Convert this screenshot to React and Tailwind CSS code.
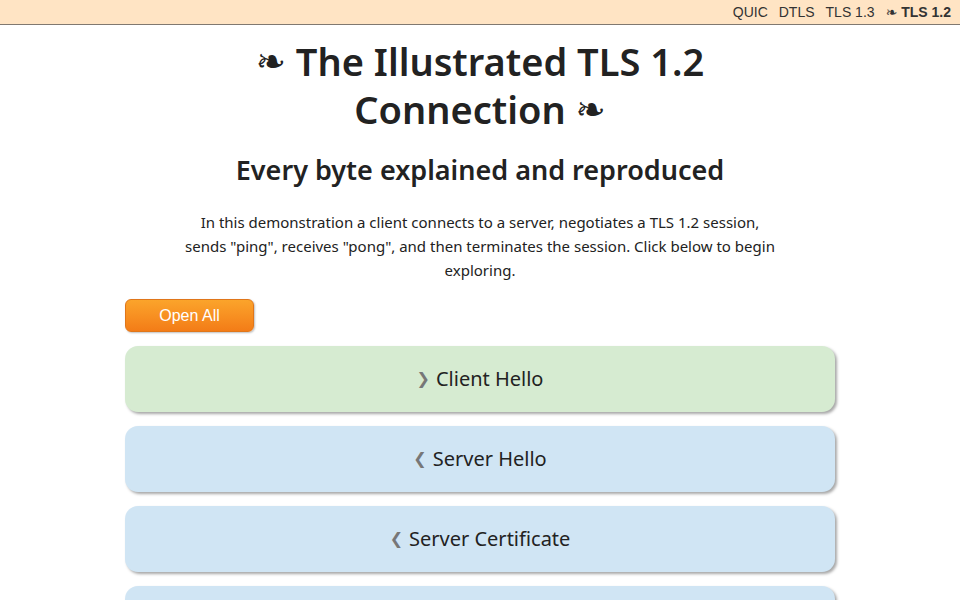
export default function App() {
  const cards = [
    { dir: "c", label: "Client Hello" },
    { dir: "s", label: "Server Hello" },
    { dir: "s", label: "Server Certificate" },
    { dir: "s", label: "Server Key Exchange Generation" },
  ];
  const sym = { fontFamily: '"DejaVu Sans", sans-serif' };
  return (
    <div className="h-[600px] overflow-hidden bg-white text-[#222]" style={{ fontFamily: '"Noto Sans", "Open Sans", sans-serif' }}>
      <div className="h-[25px] bg-[#ffe4c4] border-b border-[#807870] flex items-center justify-end pr-[9px] gap-[11px] text-[14px] text-[#333]" style={{ fontFamily: '"Liberation Sans", Arial, sans-serif' }}>
        <span>QUIC</span>
        <span>DTLS</span>
        <span>TLS 1.3</span>
        <span className="font-bold"><span style={sym} className="text-[14px] leading-none">❧</span> TLS 1.2</span>
      </div>
      <div className="w-[710px] mx-auto flex flex-col">
        <h1 className="text-center text-[38px] leading-[48px] font-semibold text-[#222] mt-[12px] w-[480px] mx-auto">
          <span style={sym} className="text-[36px] leading-none align-[2px]">❧</span> The Illustrated TLS 1.2 Connection <span style={sym} className="text-[36px] leading-none align-[2px]">❧</span>
        </h1>
        <h2 className="text-center text-[27px] leading-[36px] font-semibold text-[#222] mt-[19px]">Every byte explained and reproduced</h2>
        <p className="text-center text-[15px] leading-[24px] text-[#222] mt-[22px] w-[600px] mx-auto">
          In this demonstration a client connects to a server, negotiates a TLS 1.2 session, sends "ping", receives "pong", and then terminates the session. Click below to begin exploring.
        </p>
        <div className="mt-[17px]">
          <button className="w-[129px] h-[33px] rounded-[6px] border border-[#e0761a] text-white text-[16px] bg-gradient-to-b from-[#fba42b] to-[#f37c17] shadow-[1px_1px_2px_rgba(0,0,0,0.25)]" style={{ fontFamily: '"Liberation Sans", Arial, sans-serif' }}>
            Open All
          </button>
        </div>
        <div className="flex flex-col gap-[14px] mt-[14px]">
          {cards.map((c, i) => (
            <div
              key={i}
              className={`h-[66px] shrink-0 rounded-[13px] flex items-center justify-center text-[20px] text-[#222] shadow-[2px_2px_3px_rgba(0,0,0,0.35)] ${c.dir === "c" ? "bg-[#d6ebd1]" : "bg-[#d0e5f4]"}`}
            >
              <span className="text-[#777] text-[16px] font-bold mr-[6px]" style={sym}>{c.dir === "c" ? "❯" : "❮"}</span>
              {c.label}
            </div>
          ))}
        </div>
      </div>
    </div>
  );
}
